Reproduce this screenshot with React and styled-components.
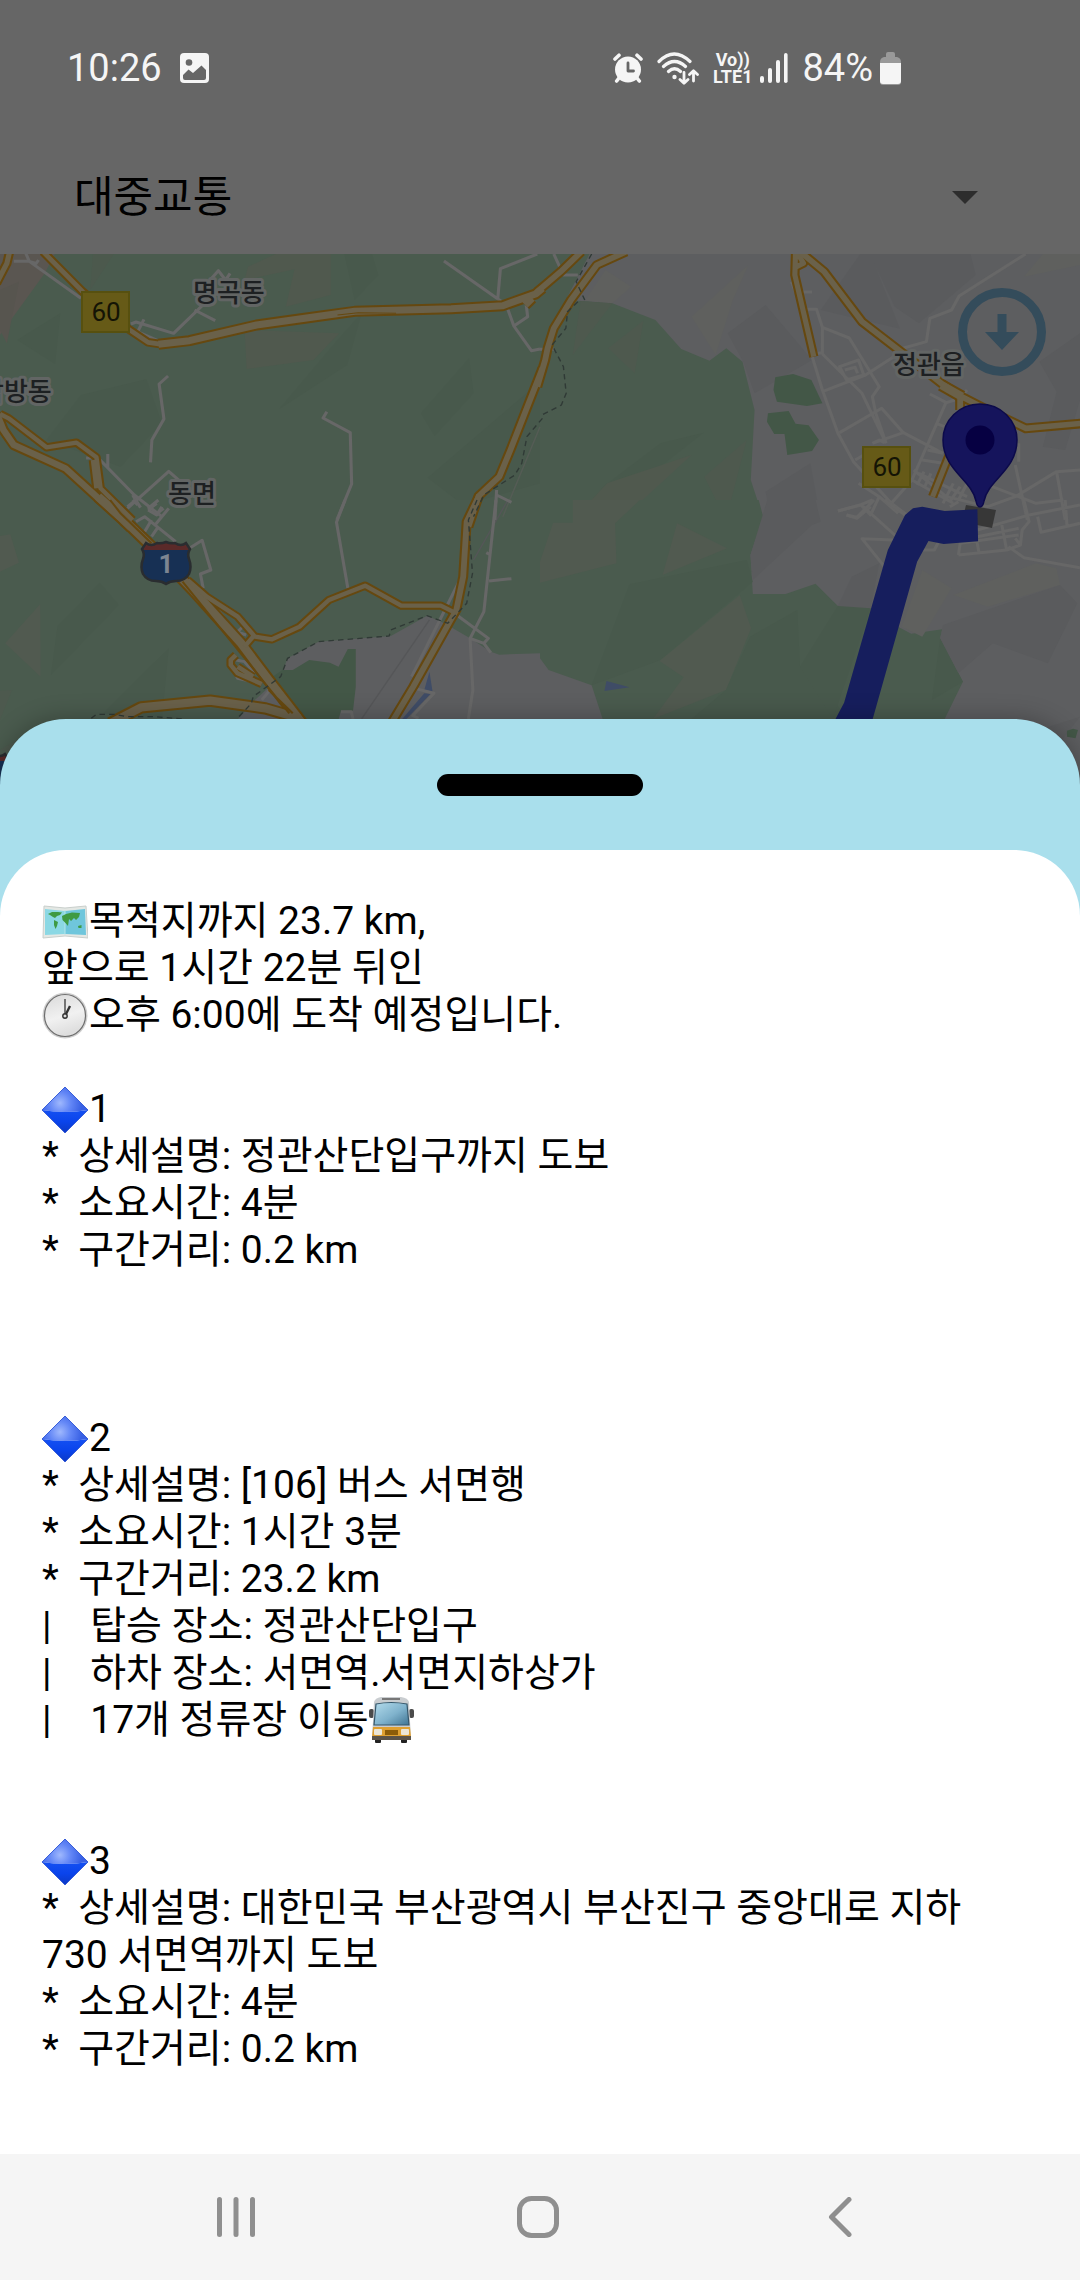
import React from 'react';
import styled, { createGlobalStyle } from 'styled-components';

const GlobalStyle = createGlobalStyle`
  *, *::before, *::after { box-sizing: border-box; }
  body {
    margin: 0;
    background: #ffffff;
    font-family: Roboto, "Noto Sans CJK KR", sans-serif;
  }
`;

const Screen = styled.main`
  display: flex;
  flex-direction: column;
  min-height: 100vh;
  overflow: hidden;
`;

/* ---------- status bar ---------- */

const StatusBar = styled.header`
  display: flex;
  align-items: center;
  justify-content: space-between;
  height: 136px;
  padding: 0 179px 0 67px;
  background: #666666;
  color: #f5f5f5;
  font-size: 38px;
  line-height: 48px;
`;

const StatusGroup = styled.div`
  display: flex;
  align-items: center;
  gap: ${(p) => p.$gap}px;
`;

const Volte = styled.span`
  display: flex;
  flex-direction: column;
  align-items: center;
  font-size: 18px;
  font-weight: 700;
  line-height: 17px;
`;

/* ---------- mode selector ---------- */

const ModeField = styled.label`
  display: flex;
  align-items: center;
  height: 118px;
  padding: 4px 102px 0 74px;
  background: #666666;
`;

const ModeSelect = styled.select`
  flex: 1;
  appearance: none;
  border: 0;
  padding: 0;
  background: transparent;
  color: #000000;
  font: 400 43px/60px Roboto, "Noto Sans CJK KR", sans-serif;
  outline: none;
`;

/* ---------- map ---------- */

const MapPanel = styled.section`
  position: relative;
  height: 465px;
  background: #5d5e60;
`;

const MapDrawing = styled.svg`
  display: block;
  width: 100%;
  height: 560px;
`;

const DownloadButton = styled.button`
  position: absolute;
  top: 34px;
  right: 34px;
  width: 88px;
  height: 88px;
  padding: 0;
  border: 0;
  background: transparent;
`;

/* ---------- bottom sheet ---------- */

const Sheet = styled.section`
  position: relative;
  display: flex;
  flex: 1;
  flex-direction: column;
  border-radius: 66px 66px 0 0;
  background: #a9dfec;
  box-shadow: 0 0 24px rgba(0, 0, 0, 0.28);
`;

const SheetHeader = styled.div`
  display: flex;
  align-items: center;
  justify-content: center;
  height: 131px;
`;

const Handle = styled.button`
  width: 206px;
  height: 22px;
  padding: 0;
  border: 0;
  border-radius: 11px;
  background: #000000;
`;

const SheetBody = styled.div`
  flex: 1;
  padding: 48px 60px 48px 42px;
  border-radius: 66px 66px 0 0;
  background: #ffffff;
  color: #000000;
  font-size: 39px;
  line-height: 47px;
`;

const Summary = styled.p`
  margin: 0;
`;

const Step = styled.article`
  margin-top: ${(p) => p.$blankLines * 47}px;
`;

const StepTitle = styled.h2`
  margin: 0;
  font-size: inherit;
  font-weight: 400;
`;

const StepLine = styled.p`
  margin: 0;
  white-space: pre-wrap;
`;

const Emoji = styled.svg`
  display: inline-block;
  width: 46px;
  height: 47px;
  margin-right: 1px;
  vertical-align: top;
`;

/* ---------- navigation bar ---------- */

const NavBar = styled.nav`
  position: relative;
  display: flex;
  height: 126px;
  padding: 0 89px 0 85px;
  background: #f5f5f5;
`;

const NavButton = styled.button`
  display: flex;
  flex: 1;
  align-items: center;
  justify-content: center;
  padding: 0;
  border: 0;
  background: transparent;
`;

/* ---------- icons ---------- */

const PictureIcon = () => (
  <svg width="29" height="30" viewBox="0 0 29 30">
    <rect width="29" height="30" rx="4" fill="#f5f5f5" />
    <circle cx="9" cy="9.500" r="3.300" fill="#666666" />
    <path d="M3 22 L8.500 16.500 L13 20 L21.500 12.500 L26 17 V25 Q26 27 24 27 H5 Q3 27 3 25 Z" fill="#666666" />
  </svg>
);

const AlarmIcon = () => (
  <svg width="30" height="30" viewBox="0 0 30 30">
    <g stroke="#f5f5f5" strokeWidth="3.600" strokeLinecap="round">
      <path d="M2 6 L6 2.200 M28 6 L24 2.200 M6 25 L3.700 28 M24 25 L26.300 28" />
    </g>
    <circle cx="15" cy="16.500" r="13" fill="#f5f5f5" />
    <path d="M15 10 V18 H20.500" fill="none" stroke="#666666" strokeWidth="2.800" strokeLinecap="round" strokeLinejoin="round" />
  </svg>
);

const WifiIcon = () => (
  <svg width="42" height="33" viewBox="0 0 42 33" fill="none" stroke="#f5f5f5" strokeWidth="3.200" strokeLinecap="round" strokeLinejoin="round">
    <path d="M2 9.500 Q17 -5.500 33 9.500 M6.500 14.500 Q17.500 4.500 28.500 14.500 M11.500 19.500 Q17.500 14 23.500 19.500" />
    <circle cx="17.500" cy="25" r="2.200" fill="#f5f5f5" stroke="none" />
    <path d="M27 20.500 V31 M23 27.500 L27 31.300 L31 27.500 M36.500 29 V19 M32.500 22.500 L36.500 18.700 L40.500 22.500" strokeWidth="2.800" />
  </svg>
);

const SignalIcon = () => (
  <svg width="28" height="30" viewBox="0 0 28 30" fill="#f5f5f5">
    <rect x="0" y="23" width="4" height="7" rx="2" />
    <rect x="8" y="15" width="4" height="15" rx="2" />
    <rect x="16" y="7" width="4" height="23" rx="2" />
    <rect x="24" y="0" width="3.600" height="30" rx="1.800" />
  </svg>
);

const BatteryIcon = () => (
  <svg width="21" height="33" viewBox="0 0 21 33">
    <path d="M6 5 V2 Q6 0 8 0 H13 Q15 0 15 2 V5 H17 Q21 6 21 10 V30 Q21 33 18 33 H3 Q0 33 0 30 V10 Q0 6 4 5 Z" fill="#999999" />
    <path d="M0 11 H21 V29 Q21 32 18 32 H3 Q0 32 0 29 Z" fill="#f5f5f5" />
  </svg>
);

const CaretIcon = () => (
  <svg width="26" height="13" viewBox="0 0 26 13" aria-hidden="true">
    <path d="M0 0 H26 L13 13 Z" fill="#2d2d2d" />
  </svg>
);

const MapEmoji = () => (
  <Emoji viewBox="0 0 46 47" aria-label="지도">
    <path d="M2 8 L23 10 L44 8 L46 40 L23 38 L1 40 Z" fill="#e4e8e4" stroke="#c9cfcc" />
    <path d="M3 11 L23 13 V36 L3 37 Z" fill="#8bd8e4" />
    <path d="M23 13 L43 11 L44 37 L23 36 Z" fill="#6fc6dc" />
    <path d="M23 12 V37" stroke="#b5e6ec" />
    <path d="M6 16 L10 14 L16 14 L20 14.500 L18 17 L15 18 L13 20 L11 19 L8 17 Z M12 22 L16 24 L15 28 L13.500 31 L12 27 Z M20 18 L24 16 L30 14.500 L38 15 L37 19 L34 22 L32 20 L29 23 L27 21 L26 28 L23.500 25 L20.500 22 Z M36 28 L39.500 27 L39.500 30 L36.500 30 Z" fill="#3f9a43" />
  </Emoji>
);

const ClockEmoji = () => (
  <Emoji viewBox="0 0 46 47" aria-label="시계">
    <defs>
      <linearGradient id="clockFace" x1="0" y1="0" x2="0.300" y2="1">
        <stop offset="0" stopColor="#d9d9d9" />
        <stop offset="0.600" stopColor="#f1f1f1" />
        <stop offset="1" stopColor="#dedede" />
      </linearGradient>
    </defs>
    <ellipse cx="23" cy="23.500" rx="22.500" ry="23" fill="#cfcfcf" />
    <ellipse cx="23" cy="23.500" rx="20.500" ry="21" fill="url(#clockFace)" stroke="#6d6d6d" strokeWidth="1.200" />
    <path d="M23 24 V7" stroke="#444444" strokeWidth="1.400" />
    <path d="M23 24 L28 14" stroke="#333333" strokeWidth="2.400" />
    <circle cx="23" cy="24" r="2.200" fill="#dddddd" stroke="#333333" strokeWidth="1.400" />
  </Emoji>
);

const DiamondEmoji = () => (
  <Emoji viewBox="0 0 46 47" aria-hidden="true">
    <defs>
      <radialGradient id="gemTop" gradientUnits="userSpaceOnUse" cx="18" cy="17" r="22">
        <stop offset="0" stopColor="#9fb8fd" />
        <stop offset="0.500" stopColor="#6286f6" />
        <stop offset="1" stopColor="#3860e4" />
      </radialGradient>
      <linearGradient id="gemBottom" x1="0" y1="0" x2="0" y2="1">
        <stop offset="0" stopColor="#1450f2" />
        <stop offset="0.500" stopColor="#0a44ec" />
        <stop offset="1" stopColor="#0c38c4" />
      </linearGradient>
    </defs>
    <path d="M23 1 L46 24 Q23 28 0 24 Z" fill="url(#gemTop)" />
    <path d="M0 24 Q23 28 46 24 L23 47 Z" fill="url(#gemBottom)" />
    <path d="M23 1 L46 24 L23 47 L0 24 Z" fill="none" stroke="#3a5fd8" strokeWidth="1" />
  </Emoji>
);

const BusEmoji = () => (
  <Emoji viewBox="0 0 46 47" aria-label="버스">
    <defs>
      <linearGradient id="busGlass" x1="0" y1="0" x2="1" y2="1">
        <stop offset="0" stopColor="#b4dcec" />
        <stop offset="0.550" stopColor="#7fb2cc" />
        <stop offset="1" stopColor="#3f7392" />
      </linearGradient>
    </defs>
    <rect x="6" y="41" width="6" height="5" rx="1" fill="#222222" />
    <rect x="32" y="41" width="6" height="5" rx="1" fill="#222222" />
    <rect x="0" y="12" width="5" height="9" rx="2" fill="#4b4b4b" />
    <rect x="40" y="12" width="5" height="9" rx="2" fill="#4b4b4b" />
    <path d="M5 5 Q6 1 12 0 H32 Q39 1 40 5 L42 42 H3 Z" fill="#c9cdd0" />
    <path d="M13 2 H31" stroke="#777777" strokeWidth="2" />
    <path d="M4 30 H41 L42 40 H3 Z" fill="#dfa031" />
    <path d="M7 7 Q22 4 38 7 L40 28 H5 Z" fill="url(#busGlass)" stroke="#34566a" strokeWidth="1.200" />
    <rect x="5" y="32" width="8" height="6" rx="1" fill="#ece6d6" />
    <rect x="32" y="32" width="8" height="6" rx="1" fill="#ece6d6" />
    <rect x="16" y="33" width="13" height="5" fill="#8c5c08" />
    <path d="M3 39 H42 V43 H3 Z" fill="#5b5348" />
  </Emoji>
);

const RecentsIcon = () => (
  <svg width="38" height="40" viewBox="0 0 38 40" fill="#8f8f8f">
    <rect x="0" width="5" height="40" rx="2.500" />
    <rect x="16.500" width="5" height="40" rx="2.500" />
    <rect x="33" width="5" height="40" rx="2.500" />
  </svg>
);

const HomeIcon = () => (
  <svg width="42" height="42" viewBox="0 0 42 42">
    <rect x="2.500" y="2.500" width="37" height="37" rx="12" fill="none" stroke="#8f8f8f" strokeWidth="5" />
  </svg>
);

const BackIcon = () => (
  <svg width="24" height="40" viewBox="0 0 24 40">
    <path d="M21 2.500 L3.500 20 L21 37.500" fill="none" stroke="#8f8f8f" strokeWidth="5" strokeLinecap="round" strokeLinejoin="round" />
  </svg>
);

/* ---------- map artwork: four tiles, each with its own grid ---------- */

const tileOrigin = {
  nw: 'translate(0 250) scale(0.3444 0.3333)',
  ne: 'translate(540 250) scale(0.3444 0.3333)',
  sw: 'translate(0 500) scale(0.3444 0.3333)',
  se: 'translate(540 500) scale(0.3444 0.3333)',
};

const GREEN = '#4a5b4e';
const DARK = '#48594c';
const BROWN = '#515a50';
const CITY = '#5d5e60';
const CITY_DARK = '#5a5b5d';
const CITY_WARM = '#5f605e';
const FOREST = '#435747';
const WATER = '#3f4c66';

const land = [
  ['nw', GREEN, 'M0 0H1570V810H0Z'],
  ['nw', '#5a5651', 'M0 0H165L130 70L0 255Z'],
  ['nw', '#57554f', 'M0 120L55 95L20 280L0 240Z'],
  ['nw', DARK, 'M175 190L50 270L160 342Z'],
  ['nw', DARK, 'M235 435L425 388L470 520L350 650L135 570Z'],
  ['nw', '#4c594d', 'M270 12L262 120L330 12Z'],
  ['nw', '#50594e', 'M720 50L800 12H960V135L830 170L855 58L710 90Z'],
  ['nw', DARK, 'M975 12H1080L1098 75L1030 150L1000 12Z'],
  ['nw', '#50594e', 'M710 240L985 250L910 330L716 357Z'],
  ['nw', DARK, 'M1050 190L1008 345L810 478L980 270Z'],
  ['nw', DARK, 'M1362 325L1375 430L1262 558L1222 490Z'],
  ['nw', DARK, 'M1568 395L1242 683L1345 765L1568 700Z'],
  ['ne', CITY, 'M0 0H1570V810H0Z'],
  ['ne', GREEN, 'M0 0H150L75 150L118 153L210 160L335 210L410 297L492 332L541 295L588 335L623 480L612 690L650 810H0Z'],
  ['ne', CITY_WARM, 'M130 152L190 60L265 110L210 160Z'],
  ['ne', CITY_WARM, 'M605 45L440 200L510 315L560 150Z'],
  ['ne', '#4e594e', 'M118 153L210 160L95 315Z'],
  ['ne', '#4e594e', 'M300 212L198 295L275 370Z'],
  ['ne', DARK, 'M475 548L350 580L190 705L100 810L300 690Z'],
  ['ne', '#50594e', 'M440 615L195 700L95 810H235Z'],
  ['ne', '#4e594e', 'M600 570L477 680L540 810Z'],
  ['ne', CITY_DARK, 'M655 165L545 250L590 335L623 430L790 330Z'],
  ['ne', CITY_DARK, 'M930 12L815 180L1045 236L970 40L1000 12Z'],
  ['ne', CITY_DARK, 'M1000 12H1250L1265 75L1100 220L1030 170L970 40Z'],
  ['ne', CITY_WARM, 'M1460 12H1568V45L1405 80Z'],
  ['ne', CITY_DARK, 'M1568 250L1450 335L1500 425L1460 590L1525 600L1568 450Z'],
  ['ne', CITY_DARK, 'M785 640L655 725L670 810H815Z'],
  ['ne', FOREST, 'M683 382L735 372L788 390L820 460L775 468L688 455L678 420Z'],
  ['ne', FOREST, 'M662 490L722 483L742 521L780 526L810 570L790 603L718 615L710 552H680L659 515Z'],
  ['sw', GREEN, 'M0 0H1570V1110H0Z'],
  ['sw', BROWN, 'M0 108L30 103L55 188L0 215Z'],
  ['sw', BROWN, 'M117 312L15 430L118 530Z'],
  ['sw', DARK, 'M290 248L345 315L148 525L167 378Z'],
  ['sw', DARK, 'M490 445L300 640L470 657Z'],
  ['sw', '#4d594e', 'M0 572L35 570L0 660Z'],
  ['sw', '#4d594e', 'M0 750L130 670L60 760Z'],
  ['sw', CITY, 'M1570 460L1450 464L1425 455L1365 415L1290 370L1240 347L1135 408L925 425L835 475L815 530L740 600L680 670V800H1570Z'],
  ['sw', FOREST, 'M1010 447H1033V560L1025 632H990L980 670H885L770 545L820 510H850L898 480L958 488L983 500Z'],
  ['sw', WATER, 'M1247 515L1256 575L1232 570Z'],
  ['sw', WATER, 'M1232 580L1250 582L1180 657H1168Z'],
  ['se', CITY, 'M0 0H1570V1110H0Z'],
  ['se', GREEN, 'M0 0H635L648 50L611 165L618 282H713L800 251L865 318L925 305L960 325L1045 383L1078 401L1168 388L1162 415L1228 545L1175 657L1140 720H200L182 657L150 556L25 510L0 475Z'],
  ['se', BROWN, 'M95 0H290L218 70L222 190L0 248V185L38 68H95Z'],
  ['se', BROWN, 'M398 70L543 145L356 225Z'],
  ['se', DARK, 'M600 180L260 253L150 556L350 480L618 245Z'],
  ['se', BROWN, 'M580 285L613 385L540 570L328 657L417 532L347 483Z'],
  ['se', DARK, 'M747 330L610 410L540 570L440 657H900L755 500Z'],
  ['se', DARK, 'M865 318L925 305L960 325L850 657L755 500Z'],
  ['se', DARK, 'M1162 415L1228 545L1138 600Z'],
  ['se', CITY_DARK, 'M660 0H800L815 65L790 75L618 240L611 165Z'],
  ['se', CITY_DARK, 'M985 190L905 230L865 318L960 325Z'],
  ['se', CITY_WARM, 'M1110 210L1195 265L1110 410L1050 380Z'],
  ['se', CITY_WARM, 'M1200 285L1440 190L1500 205L1510 255L1300 320Z'],
  ['se', CITY_DARK, 'M1510 255L1560 310L1475 490L1315 430L1215 520L1162 415L1170 375Z'],
  ['se', CITY_DARK, 'M1568 650L1420 700L1500 740Z'],
  ['se', FOREST, 'M1530 692L1548 686L1562 690L1555 715L1530 710Z'],
  ['se', WATER, 'M193 543L260 562L187 573Z'],
];

const lanes = [
  ['nw', 'M40 34H85L235 145M75 10L85 34L105 40L112 30M380 222L395 216L504 250L634 120M610 90L634 62L655 90L668 70M565 180L625 212M400 245L418 208M395 243L465 275L440 285M488 378L462 402L476 507L441 570L437 637M949 485L938 504L1017 548L1021 702L978 810M1289 33L1450 150L1470 165L1492 228L1532 200L1528 165M1445 150L1453 56L1560 12M1492 228L1543 302L1568 297M250 624H285L390 735L470 800M313 612V652M370 775L490 664L530 700M385 735L408 773M1442 720L1437 810M1442 735L1485 757M430 780L455 760M450 795L475 775'],
  ['ne', 'M40 12L68 75H110M0 298H40M730 40L762 50M730 95L742 126H790M770 178H803L820 232V308L788 312M788 312L820 420L865 550L910 635L1020 760L1085 810M820 312L935 430L1005 580M820 232L898 264L985 410L965 440L975 490L1005 580M820 425L945 375L1035 315M870 350L925 330L940 375L890 390ZM885 360L915 352L922 370M1035 300L1122 275L1132 205L1195 180L1217 138L1410 12M870 548L992 475L1055 548L1170 610M965 580L1055 548M915 630L965 600M965 580L985 570L1000 578M1180 455L1080 690L1020 760M1132 432L1180 458L1205 450M1240 420L1225 440M1150 520L1175 530M1110 630L1170 640M1170 610L1125 600M1085 660L1180 740L1300 770L1380 740L1500 665L1568 660M1100 670L1240 740M1080 690L1200 760M1115 665L1095 705M1135 670L1115 715M1160 690L1140 735M1200 700L1170 760M1220 710L1190 755M1240 700L1215 750M1300 705L1440 760L1520 750M1380 645L1415 810M1390 580V635M1500 665L1525 810M865 783L932 765L960 795L985 740L925 700M890 795L920 805L960 770M985 740L1040 790'],
  ['sw', 'M1002 0L977 67L1010 265M1440 0L1405 335L1365 415L1373 570L1360 657M1420 243L1485 236M1412 158L1425 165M1330 348L1418 415L1405 430L1425 458M1365 415L1405 430M550 145L587 121L612 210L582 222L590 265M395 65L420 50L510 125M420 95L440 60M440 110L460 80M450 75L490 25M370 20L395 0M400 15L385 0M430 25L460 0M430 30L455 45L470 20M630 325L685 400L710 375M685 395L715 405M680 515L690 535L755 550M685 480L710 485L740 520M1195 563L1260 580L1200 645M1340 230L1195 530M1195 645L1215 655M990 635H1020L1025 657M760 600L800 550'],
  ['se', 'M865 33L932 14L965 0M890 45L920 52L970 0M932 14L1030 105L1100 150H1145L1160 120M1028 120L935 116L1000 200M1000 0L1080 60M1190 20L1215 5M1270 90L1420 45L1568 15M1215 165L1355 150L1395 135L1400 90L1420 65L1405 0M1215 165L1220 130L1390 105M1270 110L1390 85M1340 70L1355 150M1265 105L1275 160M1380 115L1395 135M1360 140L1405 173L1568 203M1445 50L1455 97L1568 70M1525 0L1530 75'],
];

const highways = [
  ['nw', 16, 'M28 5L20 40L-10 100'],
  ['nw', 15, 'M125 5L240 125L370 235L430 277L470 283'],
  ['nw', 22, 'M460 283L550 272L745 225L890 204L1030 184L1310 176L1460 167L1555 132L1575 115M1525 165L1545 145'],
  ['nw', 20, 'M-10 490L10 540L40 585L190 655L355 810L380 835'],
  ['nw', 14, 'M0 492L25 505L135 592L222 578L280 622L292 715L385 810M270 630L280 715'],
  ['nw', 18, 'M1360 830L1390 738L1450 680L1482 600L1575 355'],
  ['ne', 18, 'M-8 125L60 65L120 5M-8 410L15 330L22 295L40 235L90 150L165 45L250 5'],
  ['ne', 16, 'M742 5L740 75L795 320M745 5L765 40L745 50'],
  ['ne', 18, 'M755 5L825 65L935 215L1050 307L1165 400L1225 440L1290 475L1410 535L1575 520M1220 440V480'],
  ['ne', 26, 'M1165 405L1225 440'],
  ['ne', 16, 'M1190 610L1140 740'],
  ['sw', 26, 'M285 -10L350 50L440 140L560 270L700 430L780 540L885 680'],
  ['sw', 14, 'M545 240L600 290L690 350L740 410L790 418L870 380L955 300L1060 257L1165 317H1280L1325 340M735 410L710 440M685 465L670 480V495L690 520L760 552M690 500L735 530'],
  ['sw', 18, 'M1392 -15L1355 65L1345 230L1325 330L1200 560L1130 680'],
  ['sw', 26, 'M320 670L410 622L610 602L770 625L870 655'],
];

const rails = [
  ['nw', 'M1575 505L1530 560L1515 640L1495 675L1405 735L1375 800'],
  ['ne', 'M150 12L105 95L130 150M110 155L80 185L75 235L35 285L68 350L76 430L62 465L0 498'],
  ['sw', 'M1385 0L1360 60L1372 220L1355 310L1300 370L1240 347L1135 390L1130 408L925 425L835 475L815 530L735 590L730 610L685 660M265 655L280 643H330L370 650H450L530 657'],
];

const LaneLayer = ({ color, width }) =>
  lanes.map(([tile, d]) => (
    <path key={tile} transform={tileOrigin[tile]} d={d} fill="none" stroke={color} strokeWidth={width} strokeLinejoin="round" />
  ));

const HighwayLayer = ({ color, grow }) =>
  highways.map(([tile, width, d]) => (
    <path key={d} transform={tileOrigin[tile]} d={d} fill="none" stroke={color} strokeWidth={width + grow} strokeLinejoin="round" />
  ));

const MapLabel = styled.text`
  font: 500 26px/30px Roboto, "Noto Sans CJK KR", sans-serif;
  fill: #1d2022;
  stroke: #626564;
  stroke-width: 6px;
  stroke-linejoin: round;
  paint-order: stroke;
`;

const RoadNumber = styled.text`
  font: ${(p) => (p.$light ? 700 : 400)} 26px/30px Roboto, sans-serif;
  fill: ${(p) => (p.$light ? '#7d8592' : '#141405')};
  text-anchor: middle;
`;

const RouteBadge = ({ x, y }) => (
  <g>
    <rect x={x + 1} y={y + 1} width="47" height="40" fill="#665a17" stroke="#57500f" strokeWidth="2" />
    <RoadNumber x={x + 25} y={y + 30}>60</RoadNumber>
  </g>
);

const shieldShape = 'M5 2 Q10 6 16 2 Q20 3 25 1 Q30 3 34 2 Q40 6 45 2 L49 8 Q46 13 48 18 Q51 26 48 33 Q44 40 35 40 Q29 40 25 43 Q21 40 15 40 Q6 40 2 33 Q-1 26 2 18 Q4 13 1 8 Z';

const HighwayShield = ({ x, y, number }) => (
  <g transform={`translate(${x} ${y})`}>
    <path d={shieldShape} fill="#173054" />
    <path d="M5 2 Q10 6 16 2 Q20 3 25 1 Q30 3 34 2 Q40 6 45 2 L49 9 H1 Z" fill="#5a2a29" />
    <path d={shieldShape} fill="none" stroke="#2a2d30" strokeWidth="2.500" />
    {number && <RoadNumber $light x="25" y="32">{number}</RoadNumber>}
  </g>
);

const RouteMap = () => (
  <MapDrawing viewBox="0 254 1080 560" preserveAspectRatio="xMidYMin slice" role="img" aria-label="경로 지도">
    {land.map(([tile, fill, d]) => (
      <path key={tile + d} transform={tileOrigin[tile]} d={d} fill={fill} />
    ))}
    <path transform={tileOrigin.sw} d="M1247 360L1050 657M1475 0L1375 180" stroke="#555658" strokeWidth="4" fill="none" />
    <path transform={tileOrigin.nw} d="M1568 530L1460 800" stroke="#555c55" strokeWidth="4" fill="none" />
    <LaneLayer color="#676767" width={9} />
    <HighwayLayer color="#66480f" grow={11} />
    <HighwayLayer color="#6a614a" grow={-1} />
    <path transform={tileOrigin.sw} d="M320 0L350 40L440 130M530 245L840 640M780 570L850 640" stroke="#66480f" strokeWidth="6" fill="none" />
    <path transform={tileOrigin.nw} d="M980 195L1040 188L1150 190" stroke="#66480f" strokeWidth="3" fill="none" />
    {rails.map(([tile, d]) => (
      <path key={tile} transform={tileOrigin[tile]} d={d} fill="none" stroke="#303a36" strokeWidth="4" strokeDasharray="16 12" />
    ))}
    <RouteBadge x={81} y={291} />
    <RouteBadge x={862} y={446} />
    <HighwayShield x={141} y={541} number="1" />
    <HighwayShield x={-40} y={752} />
    <MapLabel x="193" y="302">명곡동</MapLabel>
    <MapLabel x="-20" y="401">삼방동</MapLabel>
    <MapLabel x="168" y="503">동면</MapLabel>
    <MapLabel x="893" y="374">정관읍</MapLabel>
    <path d="M966 505 L996 510 L992 528 L962 522 Z" fill="#373737" />
    <path
      transform={tileOrigin.se}
      d="M1270 28L1175 33L1110 20L1083 25L1060 45L1010 150L883 608L858 657L835 700H955L966 657L1095 185L1128 123L1172 132L1272 124Z"
      fill="#161e5d"
    />
    <path
      d="M980 507 Q977 507 976 501 C972 480 943 470 943 440 A37 36 0 0 1 1017 440 C1017 470 988 480 984 501 Q983 507 980 507 Z"
      fill="#15145c"
      stroke="#0c0a4a"
      strokeWidth="1.500"
    />
    <circle cx="980" cy="440" r="14.500" fill="#060042" />
  </MapDrawing>
);

/* ---------- content ---------- */

const steps = [
  {
    blankLines: 1,
    lines: ['*  상세설명: 정관산단입구까지 도보', '*  소요시간: 4분', '*  구간거리: 0.2 km'],
  },
  {
    blankLines: 3,
    lines: [
      '*  상세설명: [106] 버스 서면행',
      '*  소요시간: 1시간 3분',
      '*  구간거리: 23.2 km',
      '|    탑승 장소: 정관산단입구',
      '|    하차 장소: 서면역.서면지하상가',
      '|    17개 정류장 이동',
    ],
    byBus: true,
  },
  {
    blankLines: 2,
    lines: [
      '*  상세설명: 대한민국 부산광역시 부산진구 중앙대로 지하 730 서면역까지 도보',
      '*  소요시간: 4분',
      '*  구간거리: 0.2 km',
    ],
  },
];

export default function App() {
  return (
    <>
      <GlobalStyle />
      <Screen>
        <StatusBar>
          <StatusGroup $gap={18}>
            <span>10:26</span>
            <PictureIcon />
          </StatusGroup>
          <StatusGroup $gap={7}>
            <StatusGroup $gap={14}>
              <AlarmIcon />
              <WifiIcon />
              <StatusGroup $gap={8}>
                <Volte>
                  <span>Vo))</span>
                  <span>LTE1</span>
                </Volte>
                <SignalIcon />
              </StatusGroup>
              <span>84%</span>
            </StatusGroup>
            <BatteryIcon />
          </StatusGroup>
        </StatusBar>

        <ModeField>
          <ModeSelect aria-label="이동 수단" defaultValue="transit">
            <option value="transit">대중교통</option>
          </ModeSelect>
          <CaretIcon />
        </ModeField>

        <MapPanel>
          <RouteMap />
          <DownloadButton type="button" aria-label="내리기">
            <svg width="88" height="88" viewBox="0 0 88 88">
              <circle cx="44" cy="44" r="39.500" fill="none" stroke="#344c5b" strokeWidth="9" />
              <path d="M39.500 26 H48.500 V44 H61 L44 62 L27 44 H39.500 Z" fill="#344c5b" />
            </svg>
          </DownloadButton>
        </MapPanel>

        <Sheet>
          <SheetHeader>
            <Handle type="button" aria-label="패널 크기 조절" />
          </SheetHeader>
          <SheetBody>
            <Summary>
              <MapEmoji />목적지까지 23.7 km,
              <br />
              앞으로 1시간 22분 뒤인
              <br />
              <ClockEmoji />오후 6:00에 도착 예정입니다.
            </Summary>
            {steps.map((step, index) => (
              <Step key={index} $blankLines={step.blankLines}>
                <StepTitle>
                  <DiamondEmoji />
                  {index + 1}
                </StepTitle>
                {step.lines.map((line, i) => (
                  <StepLine key={line}>
                    {line}
                    {step.byBus && i === step.lines.length - 1 && <BusEmoji />}
                  </StepLine>
                ))}
              </Step>
            ))}
          </SheetBody>
        </Sheet>

        <NavBar>
          <NavButton type="button" aria-label="최근 앱"><RecentsIcon /></NavButton>
          <NavButton type="button" aria-label="홈"><HomeIcon /></NavButton>
          <NavButton type="button" aria-label="뒤로"><BackIcon /></NavButton>
        </NavBar>
      </Screen>
    </>
  );
}
